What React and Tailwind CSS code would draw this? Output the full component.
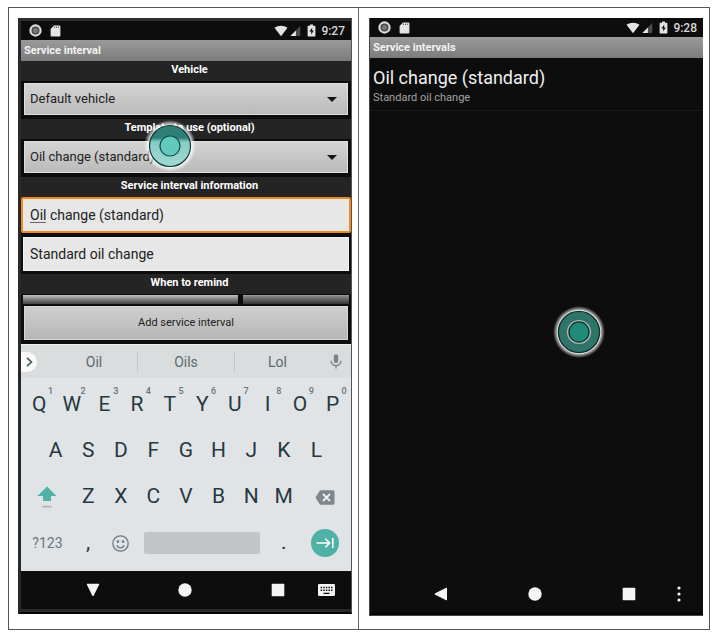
import React from 'react';

const TOP_ROW = ['Q', 'W', 'E', 'R', 'T', 'Y', 'U', 'I', 'O', 'P'];
const MIDDLE_ROW = ['A', 'S', 'D', 'F', 'G', 'H', 'J', 'K', 'L'];
const BOTTOM_ROW = ['Z', 'X', 'C', 'V', 'B', 'N', 'M'];

function StatusBar({ time }) {
  return (
    <div className="flex h-[19px] items-center bg-[#0d0d0d] pr-[6px] pl-2">
      <svg className="size-[13px]" viewBox="0 0 12 12" aria-hidden="true">
        <circle cx="6" cy="6" r="4.7" fill="#4a4a4a" stroke="#dcdcdc" strokeWidth="2" />
        <circle cx="6" cy="6" r="2.4" fill="#777" />
      </svg>
      <svg className="ml-2 h-3 w-[11px]" viewBox="0 0 11 12" aria-hidden="true">
        <path d="M4 0.4h5.4a1 1 0 0 1 1 1v9.2a1 1 0 0 1-1 1H1.6a1 1 0 0 1-1-1V4z" fill="#e4e4e4" />
        <path d="M4.6 1.6v1.4M6.5 1.6v1.4M8.4 1.6v1.4" stroke="#555" strokeWidth="0.9" />
      </svg>
      <svg className="ml-auto h-3 w-[14px]" viewBox="0 0 15 12" aria-hidden="true">
        <path d="M0.5 2.6C4.6-0.3 10.4-0.3 14.5 2.6L7.5 11.6z" fill="#e4e4e4" />
      </svg>
      <svg className="ml-[2px] h-3 w-[11px]" viewBox="0 0 12 12" aria-hidden="true">
        <path d="M11.2 0.6v10.8H0.4z" fill="#4c4c4c" />
        <path d="M6.4 5.4v6H0.4z" fill="#e8e8e8" />
      </svg>
      <svg className="ml-[6px] h-[13px] w-[9px]" viewBox="0 0 9 13" aria-hidden="true">
        <path d="M3 0.5h3v1.2h1.6a0.8 0.8 0 0 1 0.8 0.8v9.3a0.7 0.7 0 0 1-0.8 0.7H1.4a0.7 0.7 0 0 1-0.8-0.7V2.5a0.8 0.8 0 0 1 0.8-0.8H3z" fill="#e4e4e4" />
        <path d="M5.3 3.6L2.4 7.6h1.8v3l2.6-4.2H5z" fill="#111" />
      </svg>
      <span className="ml-[5px] text-[12px] leading-4 font-medium text-[#d8d8d8]">{time}</span>
    </div>
  );
}

function TitleBar({ children }) {
  return (
    <h1 className="h-[21px] bg-linear-to-b from-[#9a9a9a] to-[#7c7c7c] px-[3px] text-[11px] leading-[21px] font-bold text-[#f2f2f2]">
      {children}
    </h1>
  );
}

function SectionLabel({ htmlFor, children }) {
  return (
    <label
      htmlFor={htmlFor}
      className="block h-5 bg-[#242424] pl-[7px] text-center text-[11px] leading-[17px] font-bold text-white"
    >
      {children}
    </label>
  );
}

function Spinner({ id, value }) {
  return (
    <div className="relative h-[38px] bg-[#0c0c0c] px-[3px] pt-[2px]">
      <select
        id={id}
        defaultValue={value}
        className="block h-8 w-full appearance-none border border-[#dedede] bg-linear-to-b from-[#d3d3d3] to-[#bbbbbb] px-[5px] text-[13px] text-[#222]"
      >
        <option>{value}</option>
      </select>
      <svg className="pointer-events-none absolute top-4 right-[14px] h-[5px] w-[10px]" viewBox="0 0 10 5" aria-hidden="true">
        <path d="M0 0h10L5 5z" fill="#151515" />
      </svg>
    </div>
  );
}

function Key({ label, hint }) {
  return (
    <button type="button" className="relative col-span-2 flex items-center justify-center text-[21px] text-[#263940]">
      {label}
      {hint && <span className="absolute top-[3px] left-[25px] text-[9px] leading-3 font-medium text-[#66737a]">{hint}</span>}
    </button>
  );
}

function Keyboard() {
  return (
    <div className="bg-[#e1e4e7]">
      <div className="flex h-[34px] items-center border-t border-[#eceeee] bg-[#d9dddd] text-[14px] text-[#5d6a70]">
        <div className="w-[30px] shrink-0">
          <button type="button" aria-label="Expand" className="flex h-5 w-4 items-center justify-center rounded-r-full bg-[#fafafa]">
            <svg className="h-[10px] w-[7px]" viewBox="0 0 7 10" fill="none" stroke="#46555c" strokeWidth="1.7">
              <path d="M1 0.8L5.4 5L1 9.2" />
            </svg>
          </button>
        </div>
        <button type="button" className="h-5 flex-[87] border-r border-[#c0c5c7] leading-5">Oil</button>
        <button type="button" className="h-5 flex-[97] border-r border-[#c0c5c7] leading-5">Oils</button>
        <button type="button" className="h-5 flex-[86] leading-5">Lol</button>
        <button type="button" aria-label="Voice input" className="flex w-[31px] shrink-0 justify-center">
          <svg className="h-[15px] w-3" viewBox="0 0 12 15">
            <rect x="3.8" y="0.3" width="4.4" height="9" rx="2.2" fill="#7a858a" />
            <path d="M1 6.8a5 4.8 0 0 0 10 0M6 11.6v3" fill="none" stroke="#7a858a" strokeWidth="1.3" />
          </svg>
        </button>
      </div>
      <div className="grid auto-rows-[46px] grid-cols-20 px-[2px] pt-1 pb-[5px]">
        {TOP_ROW.map((k, i) => (
          <Key key={k} label={k} hint={String((i + 1) % 10)} />
        ))}
        <span />
        {MIDDLE_ROW.map((k) => (
          <Key key={k} label={k} />
        ))}
        <span />
        <button type="button" aria-label="Shift" className="col-span-3 flex items-center justify-center">
          <svg className="h-[22px] w-5" viewBox="0 0 20 22">
            <path d="M10 0.5L19.5 10H14v5H6v-5H0.5z" fill="#50b1a6" />
            <path d="M5.5 20.6h9" stroke="#a9afb2" strokeWidth="1.6" />
          </svg>
        </button>
        {BOTTOM_ROW.map((k) => (
          <Key key={k} label={k} />
        ))}
        <button type="button" aria-label="Backspace" className="col-span-3 flex items-center justify-center">
          <svg className="h-[15px] w-5" viewBox="0 0 20 15">
            <path d="M6 0.3h12a1.5 1.5 0 0 1 1.5 1.5v11.4a1.5 1.5 0 0 1-1.5 1.5H6Q5 14.7 4.4 13.8L0.4 7.5L4.4 1.2Q5 0.3 6 0.3z" fill="#7e878b" />
            <path d="M8 4l7 7M15 4l-7 7" stroke="#f0f2f3" strokeWidth="1.8" />
          </svg>
        </button>
        <button type="button" className="col-span-3 text-[14px] text-[#68757b]">?123</button>
        <Key label="," />
        <button type="button" aria-label="Emoji" className="col-span-2 flex items-center justify-center">
          <svg className="size-[17px]" viewBox="0 0 17 17" fill="none" stroke="#6f7b80" strokeWidth="1.3">
            <circle cx="8.5" cy="8.5" r="7.7" />
            <path d="M4.8 10.3a4 4 0 0 0 7.4 0" />
            <circle cx="5.9" cy="6.6" r="0.7" fill="#6f7b80" />
            <circle cx="11.1" cy="6.6" r="0.7" fill="#6f7b80" />
          </svg>
        </button>
        <div className="col-span-8 flex items-center px-[7px]">
          <button type="button" aria-label="Space" className="h-[22px] w-full rounded-[2px] bg-[#c2c6c9]" />
        </div>
        <Key label="." />
        <button type="button" aria-label="Next field" className="col-span-3 flex items-center justify-center">
          <span className="flex size-7 items-center justify-center rounded-full bg-[#50b1a6]">
            <svg className="h-[10px] w-[18px]" viewBox="0 0 18 10" fill="none" stroke="#fff" strokeWidth="1.6">
              <path d="M0.5 5h13M9.4 0.8L13.6 5L9.4 9.2M16.8 0v10" />
            </svg>
          </span>
        </button>
      </div>
    </div>
  );
}

function NavIcon({ label, className, children }) {
  return (
    <button type="button" aria-label={label} className={`flex items-center justify-center ${className}`}>
      <svg className="size-[14px]" viewBox="0 0 14 14" fill="#f4f4f4">
        {children}
      </svg>
    </button>
  );
}

function TouchMark({ className, id, children }) {
  return (
    <svg className={`pointer-events-none absolute size-[52px] ${className}`} viewBox="0 0 52 52" aria-hidden="true">
      <defs>
        <radialGradient id={`glow-${id}`}>
          <stop offset="80%" stopColor="#fff" stopOpacity="0.9" />
          <stop offset="100%" stopColor="#fff" stopOpacity="0" />
        </radialGradient>
      </defs>
      <circle cx="26" cy="26" r="26" fill={`url(#glow-${id})`} />
      {children}
    </svg>
  );
}

function EntryScreen() {
  return (
    <section className="relative mb-[15px] flex-1 border-t-[3px] border-r border-b-2 border-l-[3px] border-t-[#303030] border-r-[#555] border-b-[#050505] border-l-[#292929] bg-[#0d0d0d]">
      <StatusBar time="9:27" />
      <TitleBar>Service interval</TitleBar>
      <form onSubmit={(e) => e.preventDefault()}>
        <SectionLabel htmlFor="vehicle">Vehicle</SectionLabel>
        <Spinner id="vehicle" value="Default vehicle" />
        <SectionLabel htmlFor="template">Template to use (optional)</SectionLabel>
        <Spinner id="template" value="Oil change (standard)" />
        <SectionLabel htmlFor="interval-name">Service interval information</SectionLabel>
        <div className="relative h-10">
          <input
            id="interval-name"
            defaultValue="Oil change (standard)"
            className="block h-9 w-full rounded-[2px] border-2 border-[#ec8b1c] bg-[#e7e7e7] px-[7px] text-[14px] text-[#222] outline-none"
          />
          <span className="absolute top-[25px] left-[9px] h-px w-4 bg-[#666]" />
        </div>
        <div className="h-[37px] px-[2px]">
          <input
            aria-label="Description"
            defaultValue="Standard oil change"
            className="block h-[34px] w-full border border-[#f4f4f4] bg-[#e7e7e7] px-[6px] text-[14px] text-[#222] outline-none"
          />
        </div>
        <SectionLabel htmlFor="remind-distance">When to remind</SectionLabel>
        <div className="flex h-3 gap-[5px] px-[2px] pt-px">
          <button id="remind-distance" type="button" aria-label="Distance" className="h-[9px] flex-[215] border-t border-[#bbb] bg-linear-to-b from-[#b5b5b5] to-[#404040]" />
          <button type="button" aria-label="Time" className="h-[9px] flex-[106] border-t border-[#999] bg-linear-to-b from-[#888] to-[#343434]" />
        </div>
        <div className="h-[38px] px-[3px]">
          <button type="submit" className="block h-[34px] w-full border border-[#d6d6d6] bg-linear-to-b from-[#cecece] to-[#b7b7b7] text-[11px] text-[#222]">
            Add service interval
          </button>
        </div>
      </form>
      <Keyboard />
      <nav className="grid h-[41px] grid-cols-[65fr_14px_79fr_14px_79fr_14px_33fr_17px_16fr] border-b-[3px] border-[#2a2a2a]">
        <NavIcon label="Hide keyboard" className="col-start-2">
          <path d="M1.2 0.8h11.6q0.8 0 0.4 0.8L7.8 12.4q-0.8 1.2-1.6 0L0.8 1.6Q0.4 0.8 1.2 0.8z" />
        </NavIcon>
        <NavIcon label="Home" className="col-start-4">
          <circle cx="7" cy="7" r="6.7" />
        </NavIcon>
        <NavIcon label="Recent apps" className="col-start-6">
          <rect x="0.7" y="0.7" width="12.6" height="12.6" rx="0.8" />
        </NavIcon>
        <button type="button" aria-label="Switch keyboard" className="col-start-8 flex items-center">
          <svg className="h-3 w-[17px]" viewBox="0 0 17 12">
            <rect width="17" height="12" rx="1.3" fill="#f4f4f4" />
            <path d="M2.6 3.6h12M2.6 6.2h12" stroke="#111" strokeWidth="1.5" strokeDasharray="1.5 1.1" />
            <path d="M5.5 9.4h6" stroke="#111" strokeWidth="1.3" />
          </svg>
        </button>
      </nav>
      <TouchMark className="top-[99px] left-[123px]" id="entry">
        <defs>
          <linearGradient id="split" x1="0" y1="0" x2="0" y2="1">
            <stop offset="30%" stopColor="#2f7f77" />
            <stop offset="40%" stopColor="#86cdc4" />
            <stop offset="100%" stopColor="#a2d8d1" />
          </linearGradient>
        </defs>
        <circle cx="26" cy="26" r="20.5" fill="url(#split)" stroke="#0d3a38" strokeWidth="1.2" />
        <circle cx="26" cy="26" r="10" fill="#62c9bd" stroke="#0f4f4b" strokeWidth="1.2" />
      </TouchMark>
    </section>
  );
}

function ListScreen() {
  return (
    <section className="relative mb-[13px] flex flex-1 flex-col border-b border-l border-[#444] bg-[#0d0d0d]">
      <StatusBar time="9:28" />
      <TitleBar>Service intervals</TitleBar>
      <ul>
        <li className="border-b border-[#191919] px-[3px] pt-2 pb-1">
          <p className="text-[18px] leading-6 text-[#f0f0f0]">Oil change (standard)</p>
          <p className="text-[11px] leading-4 text-[#a4a4a4]">Standard oil change</p>
        </li>
      </ul>
      <nav className="mt-auto grid h-10 grid-cols-[64fr_14px_80fr_14px_80fr_14px_41fr_4px_22fr] border-b-2 border-[#050505]">
        <NavIcon label="Back" className="col-start-2">
          <path d="M13 1.2v11.6q0 0.8-0.8 0.4L1.2 7.8q-1.2-0.8 0-1.6L12.2 0.8Q13 0.4 13 1.2z" />
        </NavIcon>
        <NavIcon label="Home" className="col-start-4">
          <circle cx="7" cy="7" r="6.7" />
        </NavIcon>
        <NavIcon label="Recent apps" className="col-start-6">
          <rect x="0.7" y="0.7" width="12.6" height="12.6" rx="0.8" />
        </NavIcon>
        <button type="button" aria-label="More options" className="col-start-8 flex items-center">
          <svg className="h-4 w-1" viewBox="0 0 4 16" fill="#f4f4f4">
            <circle cx="2" cy="2" r="1.6" />
            <circle cx="2" cy="8" r="1.6" />
            <circle cx="2" cy="14" r="1.6" />
          </svg>
        </button>
      </nav>
      <TouchMark className="top-[288px] left-[183px]" id="list">
        <circle cx="26" cy="26" r="22" fill="#f0f0f0" />
        <circle cx="26" cy="26" r="20.6" fill="#2e7468" stroke="#10352f" strokeWidth="1.4" />
        <circle cx="26" cy="26" r="11.4" fill="#14302c" stroke="#a9b8b4" strokeWidth="1.4" />
        <circle cx="26" cy="26" r="9.4" fill="#1f8b78" />
      </TouchMark>
    </section>
  );
}

export default function App() {
  return (
    <main className="bg-white pt-[7px] pr-[10px] pb-[6px] pl-2 font-[Roboto,sans-serif]">
      <div className="grid grid-cols-2 border border-[#555]">
        <div className="flex border-r border-[#666] pt-[10px] pr-[6px] pl-[9px]">
          <EntryScreen />
        </div>
        <div className="flex pt-[10px] pr-[6px] pl-[10px]">
          <ListScreen />
        </div>
      </div>
    </main>
  );
}
